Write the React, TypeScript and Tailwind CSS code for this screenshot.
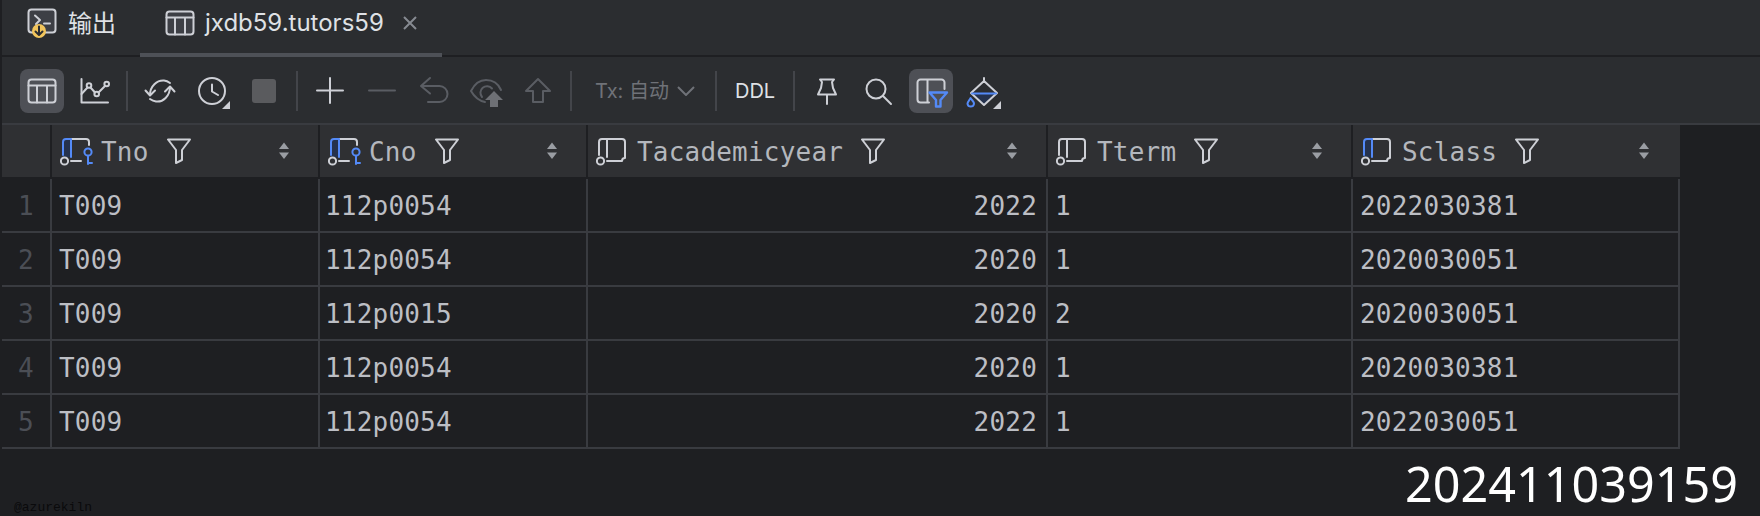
const mono = "font-['DejaVu_Sans_Mono','Liberation_Mono',monospace] tracking-[0.2px]"
const gridCols = "grid grid-cols-[50px_268px_268px_460px_305px_327px]"

const rows = [
  ["T009", "112p0054", "2022", "1", "2022030381"],
  ["T009", "112p0054", "2020", "1", "2020030051"],
  ["T009", "112p0015", "2020", "2", "2020030051"],
  ["T009", "112p0054", "2020", "1", "2020030381"],
  ["T009", "112p0054", "2022", "1", "2022030051"],
]

const columns = [
  { name: "Tno", pk: true, blue: true },
  { name: "Cno", pk: true, blue: true },
  { name: "Tacademicyear", pk: false, blue: false },
  { name: "Tterm", pk: false, blue: false },
  { name: "Sclass", pk: false, blue: true },
]

const Svg = ({ children, size = 32 }: { children: React.ReactNode; size?: number }) => (
  <svg
    width={size}
    height={size}
    viewBox={`0 0 ${size} ${size}`}
    fill="none"
    stroke="#ced0d6"
    strokeWidth="2"
    strokeLinecap="round"
    strokeLinejoin="round"
    className="overflow-visible"
  >
    {children}
  </svg>
)

const TableIcon = ({ tint }: { tint?: boolean }) => (
  <Svg>
    <rect x="2.5" y="4.5" width="27" height="23" rx="3" fill={tint ? "#3d3f45" : "none"} />
    <path d="M2.5 10.5H29.5M11 10.5V27.5M21 10.5V27.5" />
  </Svg>
)

const ChartIcon = () => (
  <Svg>
    <path d="M3.5 4V27.5H30" />
    <path d="M3.5 19L9.5 12.5M12.5 12.5L17 17.5M20.5 17.5L27 11" />
    <circle cx="11" cy="10.5" r="2.3" />
    <circle cx="18.7" cy="19" r="2.3" />
    <circle cx="28.7" cy="9" r="2.3" />
  </Svg>
)

const SyncIcon = () => (
  <Svg>
    <path d="M6 20C6 11 13 5 20 5.5C22 5.7 24 6.5 26 8" />
    <path d="M1.5 15.5L6 20.5L11 15.5" />
    <path d="M26 12C26 21 19 27.5 12 26.5C10 26.2 8 25.4 6 24" />
    <path d="M21 16.5L26 11.5L30.5 16.5" />
  </Svg>
)

const Corner = () => <polygon points="34,26 34,34 26,34" fill="#ced0d6" stroke="none" />

const ClockIcon = () => (
  <Svg>
    <circle cx="16" cy="16" r="13" />
    <path d="M16 9.5V16.5L22 20" />
    <Corner />
  </Svg>
)

const StopIcon = () => (
  <Svg>
    <rect x="4" y="4" width="24" height="24" rx="3" fill="#5a5b5e" stroke="none" />
  </Svg>
)

const PlusIcon = () => (
  <Svg>
    <path d="M3 15.5H29M16 3V28" />
  </Svg>
)

const MinusIcon = () => (
  <Svg>
    <path d="M3 15.5H29" stroke="#5a5d63" />
  </Svg>
)

const UndoIcon = () => (
  <Svg>
    <path d="M12 3L3 11L12 18.5M3 11H21.5A8 8 0 0 1 21.5 27H10" stroke="#5a5d63" />
  </Svg>
)

const EyeIcon = () => (
  <Svg>
    <path d="M1 16C5 8 11 5 16 5C22 5 28 8 31 15M1 16C5 23 10 26 15 27" stroke="#5a5d63" />
    <path d="M12 22A6.5 6.5 0 1 1 22 13.5" stroke="#5a5d63" />
    <polygon points="24,16 15,25 20,25 20,32 28,32 28,25 33,25" fill="#6e7075" stroke="none" />
  </Svg>
)

const UpIcon = () => (
  <Svg>
    <path d="M16 4L28 16H21V27H11V16H4Z" stroke="#5a5d63" />
  </Svg>
)

const PinIcon = () => (
  <Svg>
    <path d="M9 4.5H23L21 7L22 13L25 19.5H7L10 13L11 7ZM16 19.5V29" />
  </Svg>
)

const SearchIcon = () => (
  <Svg>
    <circle cx="13" cy="14" r="9.5" />
    <path d="M20 21L28 29" />
  </Svg>
)

const FilterTableIcon = () => (
  <Svg>
    <path d="M14 27.5H5.5A3 3 0 0 1 2.5 24.5V7.5A3 3 0 0 1 5.5 4.5H26.5A3 3 0 0 1 29.5 7.5V14M12.5 4.5V27.5" />
    <path d="M14.5 17.5H32L25.5 25V31.5H21V25Z" stroke="#548af7" strokeWidth="2.4" />
  </Svg>
)

const PaintIcon = () => (
  <Svg>
    <polygon points="4,18.5 30,18.5 17,30" fill="#25324d" stroke="none" />
    <path d="M17 6L30 18L17 30L4 18ZM17 3V7" />
    <path d="M5 18.5H29" stroke="#548af7" />
    <path d="M3.5 23C2.5 25.5 0.5 26.5 0.5 28.8A3.3 3.3 0 0 0 7 28.8C7 26.5 5 25.5 3.5 23Z" stroke="#548af7" />
    <Corner />
  </Svg>
)

const OutputIcon = () => (
  <Svg>
    <rect x="2.5" y="3.5" width="27" height="23" rx="3" fill="#3d3f45" />
    <path d="M9 9.5L14 14L10 18M18 17.5H24" />
    <circle cx="13" cy="25" r="7" fill="#f2c55c" stroke="none" />
    <path d="M13 20.5V28.5M9.5 25.5L13 29L16.5 25.5" stroke="#2b2d30" />
  </Svg>
)

const ColumnIcon = ({ pk, blue }: { pk: boolean; blue: boolean }) => (
  <svg
    width="34"
    height="30"
    viewBox="0 0 34 30"
    fill="none"
    stroke="#ced0d6"
    strokeWidth="2"
    strokeLinecap="round"
    strokeLinejoin="round"
    className="shrink-0"
  >
    {blue && <rect x="3" y="3" width="8" height="18" fill="#25324d" stroke="none" />}
    <path d={pk ? "M11 25H21M11 3H26A3 3 0 0 1 29 6V9" : "M11 25H26A3 3 0 0 1 29 22V6A3 3 0 0 0 26 3H11"} />
    <path d="M3 19V6A3 3 0 0 1 6 3H11V21" stroke={blue ? "#548af7" : "#ced0d6"} />
    <circle cx="4.5" cy="25" r="3.6" />
    {pk && (
      <>
        <circle cx="28" cy="16" r="3.6" stroke="#548af7" />
        <path d="M28 20V28M28 27H32" stroke="#548af7" />
      </>
    )}
  </svg>
)

const FunnelIcon = () => (
  <svg width="24" height="26" viewBox="0 0 24 26" fill="none" stroke="#ced0d6" strokeWidth="2" strokeLinejoin="round" className="shrink-0">
    <path d="M1 1.5H23L15 12V22L9 25V12Z" />
  </svg>
)

const SortIcon = () => (
  <svg width="12" height="18" viewBox="0 0 12 18" fill="#9a9da3" className="shrink-0">
    <polygon points="6,0.5 11,7 1,7" />
    <polygon points="1,10.5 11,10.5 6,17" />
  </svg>
)

const ToolBtn = ({ children, active }: { children: React.ReactNode; active?: boolean }) => (
  <div className={`flex h-11 w-11 items-center justify-center rounded-lg ${active ? "bg-[#4e5056]" : ""}`}>
    {children}
  </div>
)

const Divider = () => <div className="mx-[2px] h-10 w-[2px] bg-[#43454a]" />

export default function App() {
  return (
    <div className="flex h-[516px] w-[1760px] flex-col overflow-hidden bg-[#1e1f22] pl-[2px]">
      {/* tabs */}
      <div className="flex h-[57px] border-b-2 border-[#1e1f22] bg-[#2b2d30] font-['Inter','Noto_Sans_CJK_SC',sans-serif] text-[24px] text-[#dfe1e5]">
        <div className="flex h-[55px] w-[138px] items-center pb-[11px] pl-[24px]">
          <OutputIcon />
          <span className="ml-[10px] font-['Noto_Sans_CJK_SC',sans-serif]">输出</span>
        </div>
        <div className="flex h-[57px] w-[302px] items-center border-b-4 border-[#4e5157] pb-[7px] pl-[24px]">
          <TableIcon tint />
          <span className="ml-[9px]">jxdb59.tutors59</span>
          <svg width="16" height="16" viewBox="0 0 16 16" stroke="#868a91" strokeWidth="2" className="ml-[18px]">
            <path d="M2 2L14 14M14 2L2 14" />
          </svg>
        </div>
      </div>

      {/* toolbar */}
      <div className="flex h-[68px] items-center gap-2 border-b-2 border-[#393b40] bg-[#2b2d30] pl-[18px] pt-[2px] font-['Inter','Noto_Sans_CJK_SC',sans-serif] text-[20px]">
        <ToolBtn active><TableIcon /></ToolBtn>
        <ToolBtn><ChartIcon /></ToolBtn>
        <Divider />
        <ToolBtn><SyncIcon /></ToolBtn>
        <ToolBtn><ClockIcon /></ToolBtn>
        <ToolBtn><StopIcon /></ToolBtn>
        <Divider />
        <ToolBtn><PlusIcon /></ToolBtn>
        <ToolBtn><MinusIcon /></ToolBtn>
        <ToolBtn><UndoIcon /></ToolBtn>
        <ToolBtn><EyeIcon /></ToolBtn>
        <ToolBtn><UpIcon /></ToolBtn>
        <Divider />
        <div className="ml-[13px] flex w-[100px] items-center text-[#6f7278]">
          <span>Tx: 自动</span>
          <svg width="18" height="10" viewBox="0 0 18 10" fill="none" stroke="#6f7278" strokeWidth="2" className="ml-auto">
            <path d="M1 1L9 9L17 1" />
          </svg>
        </div>
        <div className="ml-[10px]"><Divider /></div>
        <span className="ml-[8px] w-[40px] text-[#dfe1e5]">DDL</span>
        <div className="ml-[8px]"><Divider /></div>
        <ToolBtn><PinIcon /></ToolBtn>
        <ToolBtn><SearchIcon /></ToolBtn>
        <ToolBtn active><FilterTableIcon /></ToolBtn>
        <ToolBtn><PaintIcon /></ToolBtn>
      </div>

      {/* table header */}
      <div className={`${gridCols} ${mono} h-[54px] w-[1678px] border-b-2 border-[#1e1f22] bg-[#2f3033] text-[26px] text-[#b4b7bd]`}>
        <div className="border-r-2 border-[#1e1f22]" />
        {columns.map((c) => (
          <div key={c.name} className="flex items-center border-r-2 border-[#1e1f22] pl-[8px] pr-[28px] last:border-r-0 last:pr-[30px]">
            <ColumnIcon pk={c.pk} blue={c.blue} />
            <span className="ml-[7px] pt-[2px]">{c.name}</span>
            <div className="ml-[18px]"><FunnelIcon /></div>
            <div className="ml-auto"><SortIcon /></div>
          </div>
        ))}
      </div>

      {/* rows */}
      {rows.map((r, i) => (
        <div key={i} className={`${gridCols} ${mono} h-[54px] w-[1678px] border-b-2 border-[#393b40] text-[26px] text-[#bcbec4]`}>
          <div className="flex items-center justify-center border-r-2 border-[#393b40] pt-[2px] text-[#4b4e55]">{i + 1}</div>
          <div className="flex items-center border-r-2 border-[#393b40] pl-[7px] pt-[2px]">{r[0]}</div>
          <div className="flex items-center border-r-2 border-[#393b40] pl-[5px] pt-[2px]">{r[1]}</div>
          <div className="flex items-center justify-end border-r-2 border-[#393b40] pr-[9px] pt-[2px]">{r[2]}</div>
          <div className="flex items-center border-r-2 border-[#393b40] pl-[7px] pt-[2px]">{r[3]}</div>
          <div className="flex items-center border-r-2 border-[#393b40] pl-[7px] pt-[2px]">{r[4]}</div>
        </div>
      ))}

      {/* footer */}
      <div className="flex flex-1 items-end justify-between pl-[12px] pr-[22px]">
        <span className="font-['Liberation_Mono',monospace] text-[13px] leading-[16px] text-[#0a0a0c]">@azurekiln</span>
        <span className="mb-[5px] font-['Noto_Sans',sans-serif] text-[48.5px] leading-[56px] text-white">202411039159</span>
      </div>
    </div>
  )
}
